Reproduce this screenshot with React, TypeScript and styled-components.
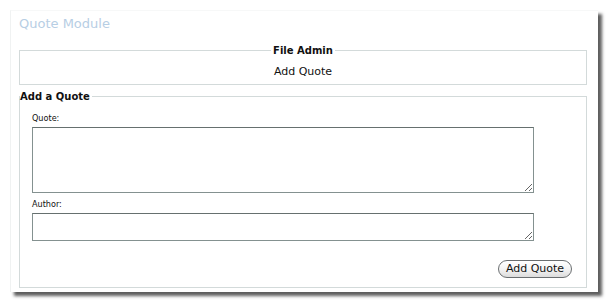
import React from "react";
import styled, { createGlobalStyle } from "styled-components";

const GlobalStyle = createGlobalStyle`
  html, body {
    margin: 0;
    padding: 0;
    background: #ffffff;
  }
  body {
    font-family: "DejaVu Sans", Verdana, sans-serif;
    color: #111;
  }
`;

const Frame = styled.div`
  width: 612px;
  height: 306px;
  padding: 10px 0 0 10px;
  box-sizing: border-box;
`;

const Page = styled.div`
  width: 588px;
  height: 282px;
  box-sizing: border-box;
  background: #fff;
  border-left: 1px solid #f0f2f2;
  border-top: 1px solid #f7f8f8;
  box-shadow: 4px 4px 3px rgba(40, 40, 40, 0.75);
  padding: 1px 11px 0 8px;
`;

const Title = styled.h1`
  margin: 0;
  font-size: 13px;
  font-weight: normal;
  line-height: 24px;
  color: #b7cee4;
`;

const Fieldset = styled.fieldset<{ $top: number }>`
  margin: ${(p) => p.$top}px 0 0 0;
  padding: 0;
  border: 1px solid #d3dada;
  min-width: 0;
`;

const Legend = styled.legend<{ $center?: boolean }>`
  margin: ${(p) => (p.$center ? "0 auto" : "0")};
  padding: ${(p) => (p.$center ? "0 2px" : "0 2px 0 0")};
  font-size: 10px;
  font-weight: bold;
  line-height: 13px;
  color: #111;
`;

const AdminBody = styled.div`
  padding: 8px 0 5px;
  text-align: center;
  font-size: 11px;
  line-height: 14px;
`;

const FormBody = styled.div`
  padding: 9px 14px 9px 12px;
  display: flex;
  flex-direction: column;
`;

const Label = styled.label<{ $gap?: number }>`
  display: block;
  font-family: "DejaVu Sans Condensed", "DejaVu Sans", sans-serif;
  font-size: 9px;
  line-height: 12px;
  margin: ${(p) => p.$gap ?? 0}px 0 3px;
  color: #111;
`;

const Field = styled.textarea<{ $h: number }>`
  display: block;
  box-sizing: border-box;
  width: 502px;
  height: ${(p) => p.$h}px;
  margin: 0;
  border: 1px solid #849190;
  border-top-color: #66706f;
  background: #fff;
  padding: 2px;
`;

const Actions = styled.div`
  display: flex;
  justify-content: flex-end;
  margin-top: 19px;
`;

const Button = styled.button`
  height: 18px;
  width: 74px;
  padding: 0;
  border: 1px solid #6a6e70;
  border-radius: 9px;
  background: linear-gradient(#ffffff 0%, #f4f4f4 50%, #dcdcdc 100%);
  font-family: "DejaVu Sans", Verdana, sans-serif;
  font-size: 11px;
  line-height: 16px;
  color: #111;
  box-shadow: inset 0 1px 1px rgba(255, 255, 255, 0.9);
`;

export default function App() {
  return (
    <Frame>
      <GlobalStyle />
      <Page>
        <Title>Quote Module</Title>
        <Fieldset $top={8}>
          <Legend $center>File Admin</Legend>
          <AdminBody>Add Quote</AdminBody>
        </Fieldset>
        <Fieldset $top={5}>
          <Legend>Add a Quote</Legend>
          <FormBody>
            <Label>Quote:</Label>
            <Field $h={66} />
            <Label $gap={5}>Author:</Label>
            <Field $h={28} />
            <Actions>
              <Button>Add Quote</Button>
            </Actions>
          </FormBody>
        </Fieldset>
      </Page>
    </Frame>
  );
}
